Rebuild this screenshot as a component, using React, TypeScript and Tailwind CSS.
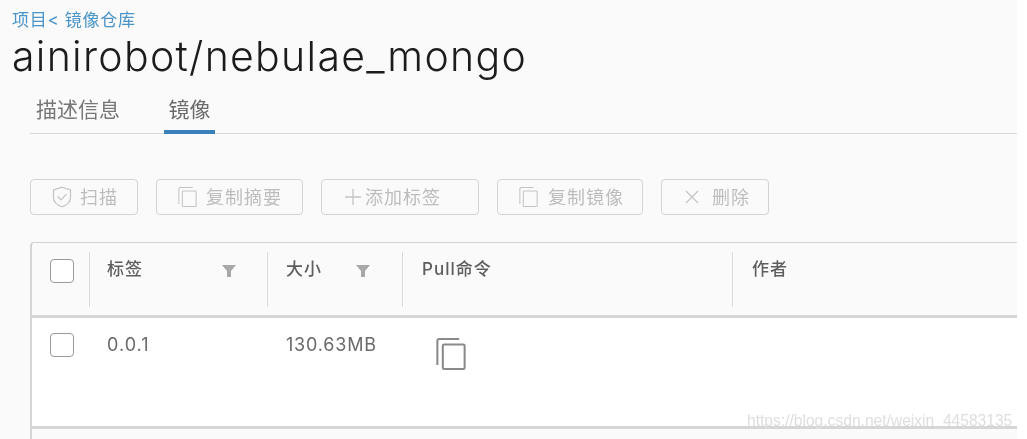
const cjk = '"Inter","Noto Sans CJK SC",sans-serif';

function CopyIcon({ className, sw = 1.2 }: { className?: string; sw?: number }) {
  return (
    <svg viewBox="0 0 22 24" className={className} fill="none" stroke="currentColor" strokeWidth={sw}>
      <path d="M1 20V2.5A1.5 1.5 0 0 1 2.5 1H17" />
      <rect x="5" y="5" width="16" height="18" rx="1" />
    </svg>
  );
}

function Shield() {
  return (
    <svg viewBox="0 0 20 22" className="w-[20px] h-[22px] text-[#c4c4c4]" fill="none" stroke="currentColor" strokeWidth="1.2">
      <path d="M10 1.2 18.5 4v7.5c0 4.5-3.6 7.6-8.5 9.3-4.9-1.7-8.5-4.8-8.5-9.3V4z" />
      <path d="M5.8 10.5 9 13.8l5.5-5.6" />
    </svg>
  );
}

function Plus() {
  return (
    <svg viewBox="0 0 18 18" className="w-[18px] h-[18px] text-[#c4c4c4]" fill="none" stroke="currentColor" strokeWidth="1.3">
      <path d="M9 1v16M1 9h16" />
    </svg>
  );
}

function Cross() {
  return (
    <svg viewBox="0 0 14 14" className="w-[14px] h-[14px] text-[#c4c4c4]" fill="none" stroke="currentColor" strokeWidth="1.2">
      <path d="M1 1l12 12M13 1 1 13" />
    </svg>
  );
}

function Filter() {
  return (
    <svg viewBox="0 0 14 12" className="w-[14px] h-[12px] text-[#a8a8a8]" fill="currentColor">
      <path d="M0 0h14L9 6v6H5V6z" />
    </svg>
  );
}

function Check() {
  return <span className="block w-[24px] h-[24px] rounded-[4px] border-[1.5px] border-[#9a9a9a] bg-white" />;
}

function Btn({ w, icon, text, gap, pl }: { w: string; icon: React.ReactNode; text: string; gap: string; pl: string }) {
  return (
    <div className={`${w} ${pl} ${gap} h-[36px] shrink-0 flex items-center rounded-[4px] border-[1.5px] border-[#d4d4d4] text-[18px] tracking-[1px] text-[#bdbdbd]`}>
      {icon}
      <span>{text}</span>
    </div>
  );
}

function HeadCell({ w, text, pl, filter, sep = true, filterMl }: { w: string; text: string; pl: string; filter?: boolean; sep?: boolean; filterMl?: string }) {
  return (
    <div className={`${w} h-full shrink-0 pt-[9px]`}>
      <div className={`h-[55px] flex items-start ${pl} ${sep ? "border-r-[1.5px] border-[#dcdcdc]" : ""}`}>
        <span className="text-[17px] leading-[34px] font-medium text-[#5e5e5e] tracking-[1px]">{text}</span>
        {filter && <span className={`${filterMl} mt-[13px]`}><Filter /></span>}
      </div>
    </div>
  );
}

export default function App() {
  return (
    <div className="relative h-[439px] w-[1027px] overflow-hidden bg-white blur-[0.6px]" style={{ fontFamily: cjk }}>
      <div className="h-full w-[1017px] bg-[#fafafa] overflow-hidden">
        <div className="pl-[12px] pt-[9px] text-[17px] leading-[22px] tracking-[0.7px] text-[#4a94c8]">项目&lt; 镜像仓库</div>
        <h1 className="pl-[12px] text-[41px] leading-[50px] font-light tracking-[1.3px] text-[#1c1c1c] whitespace-nowrap">ainirobot/nebulae_mongo</h1>

        <div className="ml-[30px] mt-[10px] h-[43px] flex items-start border-b-[1.5px] border-[#d8d8d8]">
          <div className="ml-[6px] w-[128px] text-[21px] leading-[38px] text-[#777777]">描述信息</div>
          <div className="w-[51px] h-[43px] border-b-[4px] border-[#3a80bd] text-center text-[21px] leading-[38px] text-[#6a6a6a] whitespace-nowrap">镜像</div>
        </div>

        <div className="ml-[30px] mt-[45px] flex gap-[18px]">
          <Btn w="w-[108px]" pl="pl-[21px]" gap="gap-[8px]" icon={<Shield />} text="扫描" />
          <Btn w="w-[147px]" pl="pl-[21px]" gap="gap-[9px]" icon={<CopyIcon className="w-[19px] h-[22px] text-[#c4c4c4]" />} text="复制摘要" />
          <Btn w="w-[158px]" pl="pl-[22px]" gap="gap-[3px]" icon={<Plus />} text="添加标签" />
          <Btn w="w-[146px]" pl="pl-[21px]" gap="gap-[10px]" icon={<CopyIcon className="w-[19px] h-[22px] text-[#c4c4c4]" />} text="复制镜像" />
          <Btn w="w-[108px]" pl="pl-[23px]" gap="gap-[13px]" icon={<Cross />} text="删除" />
        </div>

        <div className="ml-[30px] mt-[27px] rounded-tl-[4px] border-l-[2px] border-t-[1.5px] border-[#d4d4d4]">
          <div className="h-[75px] flex border-b-[3px] border-[#d6d6d6]">
            <div className="w-[58px] h-full shrink-0 pt-[9px]">
              <div className="h-[55px] border-r-[1.5px] border-[#dcdcdc] pl-[18px] pt-[7px]"><Check /></div>
            </div>
            <HeadCell w="w-[178px]" pl="pl-[17px]" text="标签" filter filterMl="ml-[79px]" />
            <HeadCell w="w-[135px]" pl="pl-[18px]" text="大小" filter filterMl="ml-[34px]" />
            <HeadCell w="w-[330px]" pl="pl-[19px]" text="Pull命令" />
            <HeadCell w="w-[200px]" pl="pl-[19px]" text="作者" sep={false} />
          </div>
          <div className="h-[111px] flex bg-white border-b-[3px] border-[#d6d6d6]">
            <div className="w-[58px] shrink-0 pl-[18px] pt-[15px]"><Check /></div>
            <div className="w-[179px] shrink-0 pl-[17px] pt-[14px] text-[18px] leading-[26px] tracking-[1px] text-[#6a6a6a]">0.0.1</div>
            <div className="w-[135px] shrink-0 pl-[17px] pt-[14px] text-[18px] leading-[26px] tracking-[0.8px] text-[#6a6a6a]">130.63MB</div>
            <div className="pl-[32px] pt-[19px]"><CopyIcon className="w-[30px] h-[34px] text-[#8a8a8a]" sw={1.5} /></div>
          </div>
          <div className="h-[20px]" />
        </div>
      </div>
      <div className="absolute left-[747px] top-[409px] w-[270px] text-[15.6px] leading-[24px] text-[#dedede] whitespace-nowrap" style={{ fontFamily: '"Liberation Sans",sans-serif' }}>https://blog.csdn.net/weixin_44583135</div>
    </div>
  );
}
